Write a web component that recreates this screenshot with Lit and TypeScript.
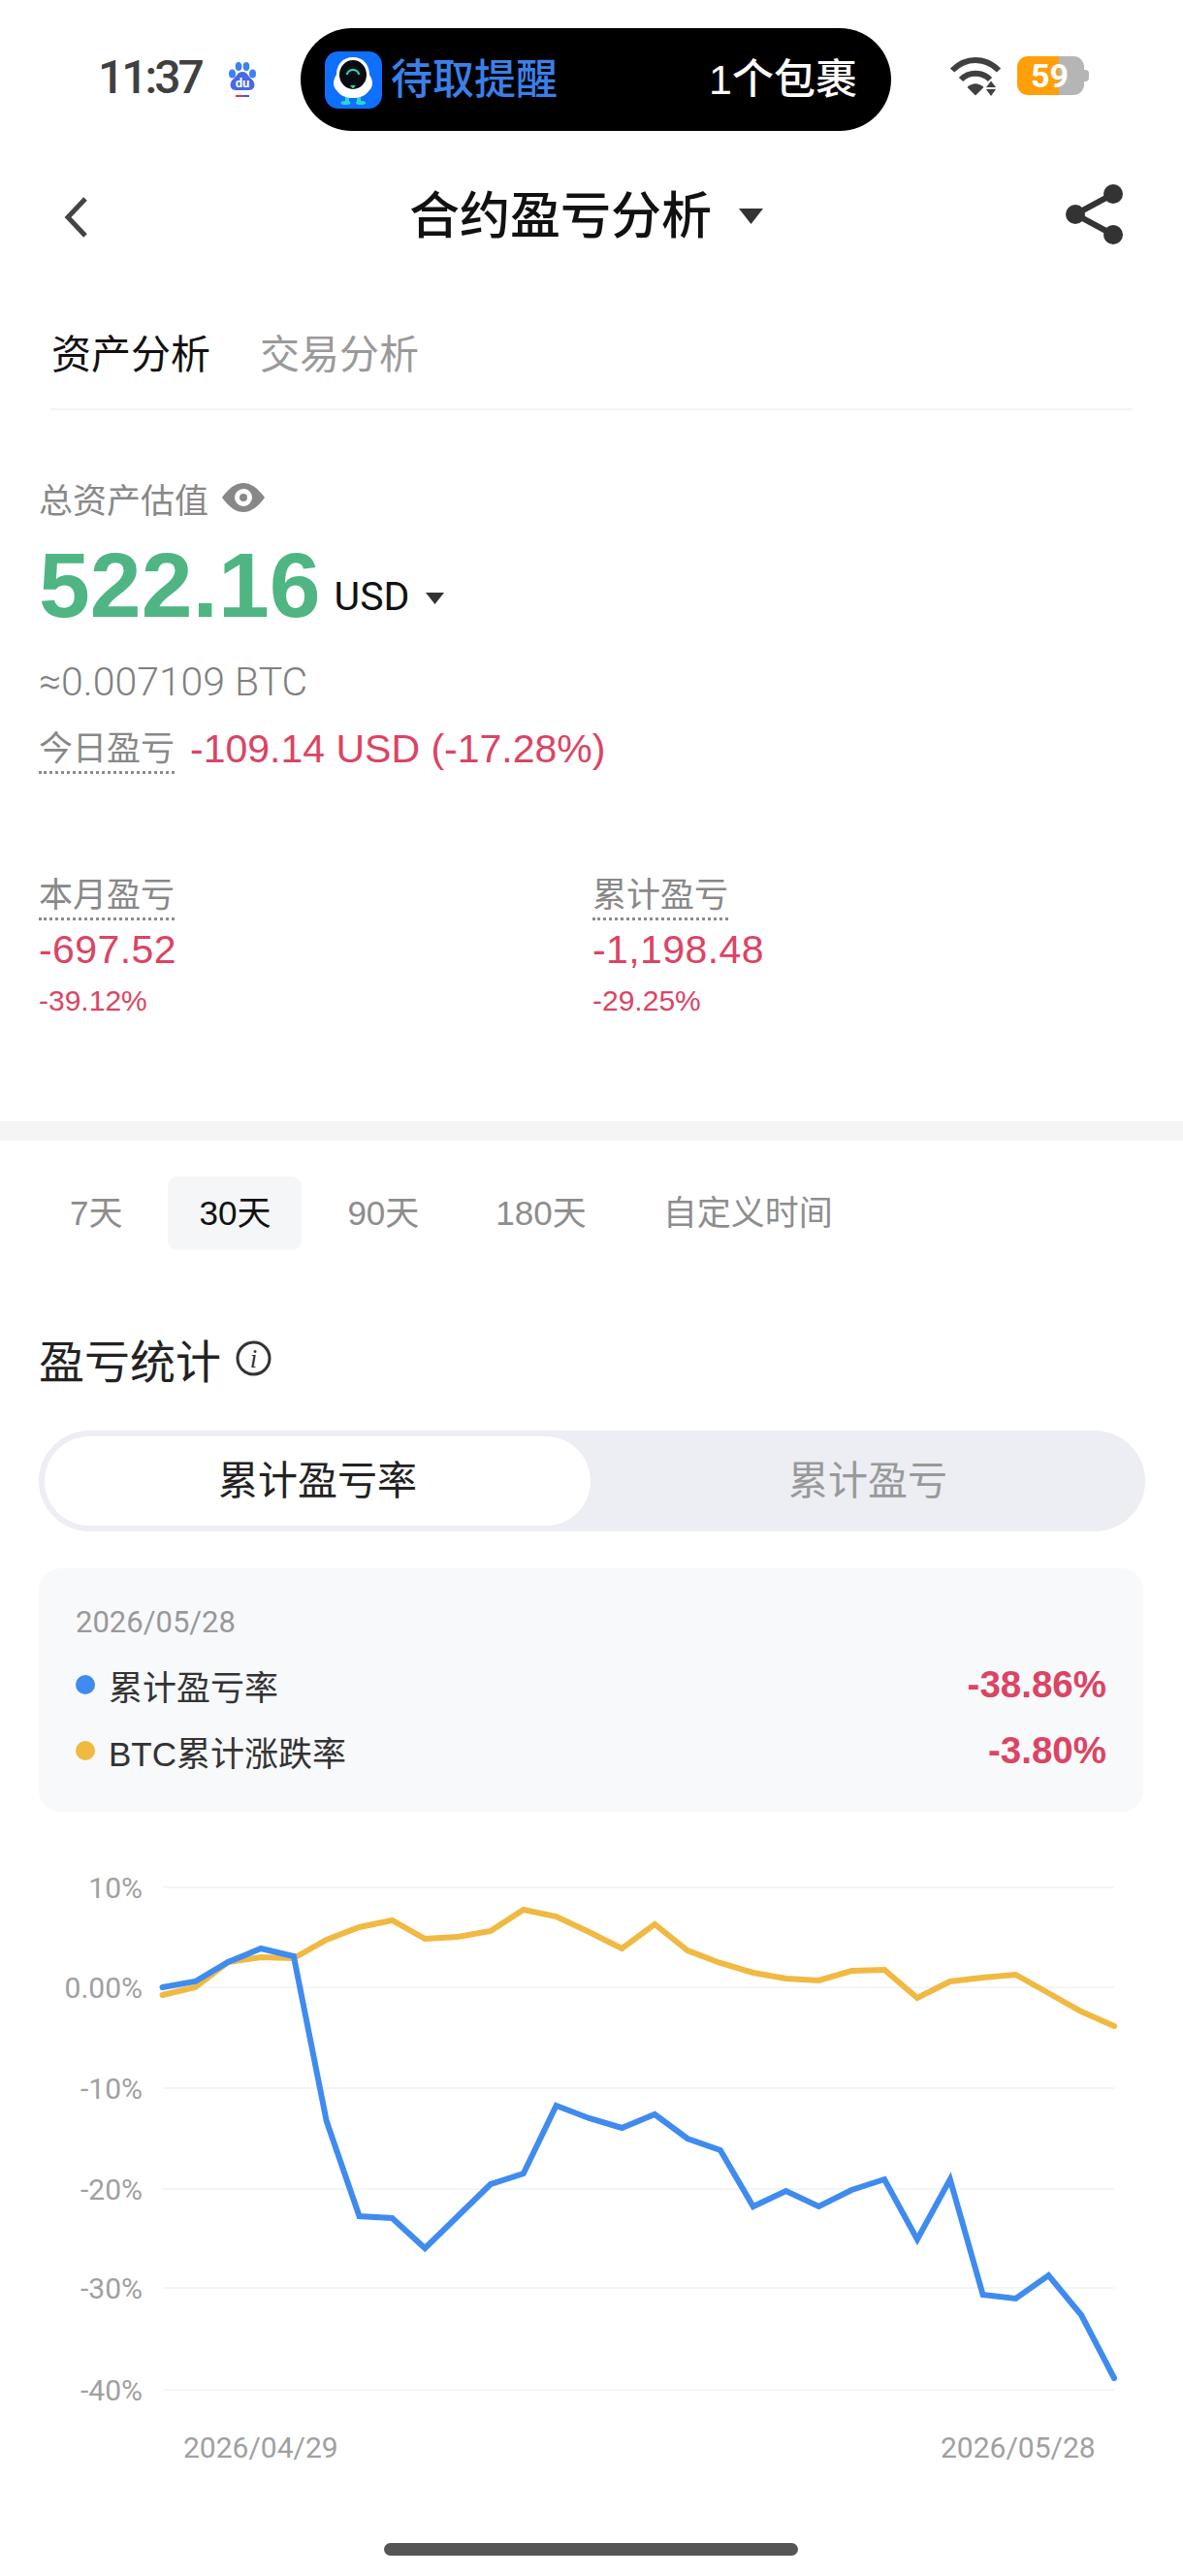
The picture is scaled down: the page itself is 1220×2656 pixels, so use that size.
import {LitElement, css, html, svg} from 'lit';
import {customElement} from 'lit/decorators.js';

// chart series, read off the reference as pixel y values (x is evenly spaced)
const BLUE = [150, 144, 124, 110, 118, 288, 386, 388, 419, 386, 353, 342, 272, 285, 295, 281, 306, 318, 376, 360, 376, 359, 348, 410, 348, 467, 471, 447, 488, 553];
const YELLOW = [158, 150, 124, 119, 120, 101, 88, 81, 100, 98, 92, 70, 77, 93, 110, 85, 112, 125, 135, 141, 143, 133, 132, 161, 144, 140, 137, 156, 175, 190];
const GRID = [
  {y: 47, label: '10%'},
  {y: 150, label: '0.00%'},
  {y: 254, label: '-10%'},
  {y: 358, label: '-20%'},
  {y: 460, label: '-30%'},
  {y: 565, label: '-40%'},
];
const RANGES = ['7天', '30天', '90天', '180天', '自定义时间'];

const toPoints = (values: number[]) =>
  values.map((y, i) => `${167.5 + (i * 981.5) / 29},${y}`).join(' ');

@customElement('app-root')
export class AppRoot extends LitElement {
  static styles = css`
    :host {
      display: block;
      width: 1220px;
      height: 2656px;
      overflow: hidden;
      background: #fff;
      font-family: 'Liberation Sans', 'Noto Sans CJK SC', sans-serif;
      color: #222;
    }
    svg {
      display: block;
      flex: none;
    }

    .status {
      height: 164px;
      display: flex;
      align-items: flex-start;
      padding-left: 101px;
      box-sizing: border-box;
    }
    .time {
      margin-top: 54px;
      font: 500 48px/52px Roboto, sans-serif;
      letter-spacing: -3px;
      color: #404040;
      width: 135px;
    }
    .baidu {
      margin-top: 63px;
      margin-left: -1px;
    }
    .island {
      margin: 29px 0 0 45px;
      width: 609px;
      height: 106px;
      border-radius: 53px;
      background: #000;
      display: flex;
      align-items: center;
      box-sizing: border-box;
      padding: 0 35px 0 25px;
      font-size: 43px;
      font-weight: 500;
      line-height: 50px;
      color: #fff;
    }
    .island-app {
      color: #3a80e8;
      margin-left: 9px;
      flex: 1;
    }
    .wifi {
      margin: 59px 0 0 60px;
    }
    .battery {
      margin: 58px 0 0 14px;
      position: relative;
      width: 74px;
      height: 40px;
    }
    .battery-body {
      width: 69px;
      height: 40px;
      border-radius: 11px;
      background: linear-gradient(90deg, #ff9f0a 43px, #b5b5b5 43px);
      color: #fff;
      font: 700 34px/40px Roboto, sans-serif;
      padding-left: 14px;
      box-sizing: border-box;
    }
    .battery-cap {
      position: absolute;
      right: 0;
      top: 14px;
      width: 5px;
      height: 12px;
      border-radius: 0 4px 4px 0;
      background: #b5b5b5;
    }

    .nav {
      height: 114px;
      display: grid;
      grid-template-columns: 1fr auto 1fr;
      align-items: center;
      padding: 0 62px 0 55px;
    }
    .back {
      margin: 5px 0 0 10px;
    }
    .title {
      display: flex;
      align-items: center;
      gap: 28px;
      margin: 4px 4px 0 0;
      font-size: 52px;
      font-weight: 500;
      line-height: 60px;
      color: #111;
    }
    .share {
      justify-self: end;
    }

    .tabs {
      margin: 22px 52px 0;
      height: 123px;
      box-sizing: border-box;
      padding: 41px 0 0 1px;
      display: flex;
      gap: 51px;
      font-size: 41px;
      line-height: 50px;
      color: #9a9a9a;
      border-bottom: 2px solid #f4f4f4;
    }
    .tabs .on {
      color: #111;
    }

    .assets {
      height: 733px;
      box-sizing: border-box;
      padding: 67px 0 0 40px;
    }
    .asset-label {
      height: 46px;
      display: flex;
      align-items: center;
      gap: 14px;
      font-size: 35px;
      color: #888;
    }
    .balance {
      margin-top: 19px;
      height: 96px;
      display: flex;
      align-items: flex-start;
    }
    .balance-num {
      font-size: 95px;
      line-height: 96px;
      font-weight: 700;
      color: #4fb583;
    }
    .balance-cur {
      margin: 36px 0 0 14px;
      font: 400 41px/48px Roboto, sans-serif;
      color: #111;
    }
    .balance-arrow {
      margin: 56px 0 0 17px;
    }
    .btc {
      margin-top: 29px;
      height: 46px;
      font: 300 41px/46px Roboto, sans-serif;
      color: #808080;
    }
    .today {
      margin-top: 23px;
      height: 50px;
      display: flex;
      align-items: flex-start;
      gap: 16px;
    }
    .dotted {
      display: inline-block;
      font-size: 35px;
      line-height: 46px;
      color: #888;
      border-bottom: 3px dotted #8c8c8c;
    }
    .today-val {
      font-size: 41px;
      line-height: 46px;
      color: #dc4463;
    }
    .stats {
      margin-top: 101px;
      display: grid;
      grid-template-columns: 571px 1fr;
    }
    .stat-val {
      margin-top: 8px;
      font-size: 41px;
      letter-spacing: 0.4px;
      line-height: 44px;
      color: #dc4463;
    }
    .stat-pct {
      margin-top: 13px;
      font-size: 30px;
      line-height: 36px;
      color: #dc4463;
    }

    .band {
      height: 20px;
      background: #f5f5f5;
    }

    .ranges {
      margin: 37px 0 0 40px;
      display: flex;
      gap: 15px;
    }
    .range {
      height: 76px;
      padding: 0 32px;
      border-radius: 10px;
      font-size: 35px;
      line-height: 76px;
      color: #8d8d8d;
    }
    .range.on {
      background: #f5f6f7;
      color: #111;
    }

    .heading {
      margin: 85px 0 0 40px;
      height: 52px;
      display: flex;
      align-items: center;
      gap: 15px;
      font-size: 47px;
      color: #222;
    }

    .segment {
      margin: 49px 39px 0 40px;
      height: 104px;
      border-radius: 52px;
      background: #eceef4;
      display: grid;
      grid-template-columns: 563px 1fr;
      padding: 6px 0 6px 6px;
      box-sizing: border-box;
      font-size: 41px;
      line-height: 92px;
      text-align: center;
      color: #999;
    }
    .segment .on {
      background: #fff;
      border-radius: 46px;
      color: #222;
    }

    .card {
      margin: 38px 41px 0 40px;
      height: 251px;
      box-sizing: border-box;
      border-radius: 22px;
      background: #f8f9fb;
      padding: 36px 38px 0 38px;
    }
    .card-date {
      font: 400 31px/40px Roboto, sans-serif;
      color: #999;
    }
    .row {
      margin-top: 21px;
      height: 46px;
      display: flex;
      align-items: center;
      font-size: 35px;
      color: #333;
    }
    .row + .row {
      margin-top: 22px;
    }
    .dot {
      width: 20px;
      height: 20px;
      border-radius: 50%;
      margin-right: 14px;
    }
    .row-val {
      margin-left: auto;
      font-size: 38.5px;
      font-weight: 700;
      color: #dc4463;
    }

    .chart {
      margin-top: 31px;
    }
    .chart text {
      font-family: Roboto, sans-serif;
      font-size: 30px;
      fill: #a0a0a0;
    }

    .home {
      margin: 23px 0 0 396px;
      width: 427px;
      height: 13px;
      border-radius: 7px;
      background: #555;
    }
  `;

  private renderMascot() {
    return html`<svg width="59" height="59" viewBox="0 0 59 59">
      <rect width="59" height="59" rx="14" fill="#0f6fff"/>
      <rect x="21" y="44" width="4" height="9" fill="#27d8d0"/>
      <rect x="33" y="44" width="4" height="9" fill="#27d8d0"/>
      <ellipse cx="21.500" cy="53" rx="5" ry="2" fill="#27d8d0"/>
      <ellipse cx="37" cy="53" rx="5" ry="2" fill="#27d8d0"/>
      <path d="M29 6C40 6 46 14 46 24C50 30 50 36 46 40C42 46 36 48 29 48C22 48 16 46 12 40C8 36 8 30 12 24C12 14 18 6 29 6Z" fill="#fff"/>
      <ellipse cx="29" cy="24" rx="14" ry="15" fill="#080c10"/>
      <path d="M23 23a6.5 6.5 0 0 1 12 0" fill="none" stroke="#27d8c0" stroke-width="2.2" stroke-linecap="round"/>
      <path d="M26 35h6l-3 3.500z" fill="#27d8c0"/>
    </svg>`;
  }

  private renderBaidu() {
    return html`<svg class="baidu" width="30" height="38" viewBox="0 0 30 38">
      <ellipse cx="4.500" cy="13" rx="3.500" ry="4.500" fill="#3b82f0"/>
      <ellipse cx="11" cy="5.500" rx="3.300" ry="4.500" fill="#3b82f0"/>
      <ellipse cx="19" cy="5.500" rx="3.300" ry="4.500" fill="#3b82f0"/>
      <ellipse cx="25.500" cy="13" rx="3.500" ry="4.500" fill="#3b82f0"/>
      <path d="M15 11C20 11 21 16 25 19C29 23 28 30 22 30H8C2 30 1 23 5 19C9 16 10 11 15 11Z" fill="#4a67e6"/>
      <text x="15" y="27" text-anchor="middle" font-family="Roboto, sans-serif" font-size="13" font-weight="700" fill="#fff">du</text>
      <rect x="8" y="35" width="7" height="2" fill="#e5383b"/>
      <rect x="15" y="35" width="7" height="2" fill="#3b5be0"/>
    </svg>`;
  }

  private renderWifi() {
    return html`<svg class="wifi" width="56" height="42" viewBox="0 0 56 42">
      <path d="M3 13.500C17 -0.500 37 -0.500 51 13.500" fill="none" stroke="#404040" stroke-width="6"/>
      <path d="M12 23C20 14.500 34 14.500 42 23" fill="none" stroke="#404040" stroke-width="6"/>
      <path d="M18.500 31C24 26 30 26 35.500 31L27 39.500z" fill="#404040"/>
      <path d="M43 24.500l5 6.500h-10zM38 33h10l-5 7z" fill="#404040"/>
    </svg>`;
  }

  private renderChart() {
    return html`<svg class="chart" width="1220" height="700" viewBox="0 0 1220 700">
      ${GRID.map(
        (g) => svg`
          <line x1="168" x2="1149" y1=${g.y} y2=${g.y} stroke="#f5f5f5" stroke-width="2"/>
          <text x="147" y=${g.y + 10.500} text-anchor="end">${g.label}</text>`
      )}
      <polyline points=${toPoints(YELLOW)} fill="none" stroke="#f0b942" stroke-width="6" stroke-linecap="round" stroke-linejoin="miter"/>
      <polyline points=${toPoints(BLUE)} fill="none" stroke="#3f8bef" stroke-width="6" stroke-linecap="round" stroke-linejoin="miter"/>
      <text x="189" y="635">2026/04/29</text>
      <text x="970" y="635">2026/05/28</text>
    </svg>`;
  }

  render() {
    return html`
      <div class="status">
        <div class="time">11:37</div>
        ${this.renderBaidu()}
        <div class="island">
          ${this.renderMascot()}
          <span class="island-app">待取提醒</span>
          <span>1个包裹</span>
        </div>
        ${this.renderWifi()}
        <div class="battery">
          <div class="battery-body">59</div>
          <div class="battery-cap"></div>
        </div>
      </div>

      <div class="nav">
        <svg class="back" width="28" height="44" viewBox="0 0 28 44">
          <path d="M23 3L5 22L23 41" fill="none" stroke="#444" stroke-width="5"/>
        </svg>
        <div class="title">
          合约盈亏分析
          <svg width="25" height="16" viewBox="0 0 25 16"><path d="M0 0H25L12.500 16z" fill="#333"/></svg>
        </div>
        <svg class="share" width="60" height="64" viewBox="0 0 60 64">
          <path d="M50 11L11 32L50 53" fill="none" stroke="#333" stroke-width="6"/>
          <circle cx="50" cy="11" r="10" fill="#333"/>
          <circle cx="11" cy="32" r="10" fill="#333"/>
          <circle cx="50" cy="53" r="10" fill="#333"/>
        </svg>
      </div>

      <div class="tabs">
        <span class="on">资产分析</span>
        <span>交易分析</span>
      </div>

      <div class="assets">
        <div class="asset-label">
          总资产估值
          <svg width="44" height="30" viewBox="0 0 44 30">
            <path fill-rule="evenodd" d="M0 15C8 4 15 0 22 0S36 4 44 15C36 26 29 30 22 30S8 26 0 15ZM22 6a9 9 0 1 0 0 18a9 9 0 0 0 0-18ZM22 11a4 4 0 1 1 0 8a4 4 0 0 1 0-8Z" fill="#888"/>
          </svg>
        </div>
        <div class="balance">
          <span class="balance-num">522.16</span>
          <span class="balance-cur">USD</span>
          <svg class="balance-arrow" width="19" height="12" viewBox="0 0 19 12"><path d="M0 0H19L9.500 12z" fill="#333"/></svg>
        </div>
        <div class="btc">≈0.007109 BTC</div>
        <div class="today">
          <span class="dotted">今日盈亏</span>
          <span class="today-val">-109.14 USD (-17.28%)</span>
        </div>
        <div class="stats">
          <div>
            <span class="dotted">本月盈亏</span>
            <div class="stat-val">-697.52</div>
            <div class="stat-pct">-39.12%</div>
          </div>
          <div>
            <span class="dotted">累计盈亏</span>
            <div class="stat-val">-1,198.48</div>
            <div class="stat-pct">-29.25%</div>
          </div>
        </div>
      </div>

      <div class="band"></div>

      <div class="ranges">
        ${RANGES.map((r) => html`<div class="range ${r === '30天' ? 'on' : ''}">${r}</div>`)}
      </div>

      <div class="heading">
        盈亏统计
        <svg width="37" height="37" viewBox="0 0 37 37">
          <circle cx="18.500" cy="18.500" r="16.500" fill="none" stroke="#333" stroke-width="3"/>
          <text x="18.500" y="28" text-anchor="middle" font-family="'Liberation Serif', serif" font-style="italic" font-size="27" fill="#333">i</text>
        </svg>
      </div>

      <div class="segment">
        <div class="on">累计盈亏率</div>
        <div>累计盈亏</div>
      </div>

      <div class="card">
        <div class="card-date">2026/05/28</div>
        <div class="row">
          <span class="dot" style="background:#3f8bef"></span>累计盈亏率
          <span class="row-val">-38.86%</span>
        </div>
        <div class="row">
          <span class="dot" style="background:#f0b942"></span>BTC累计涨跌率
          <span class="row-val">-3.80%</span>
        </div>
      </div>

      ${this.renderChart()}

      <div class="home"></div>
    `;
  }
}
